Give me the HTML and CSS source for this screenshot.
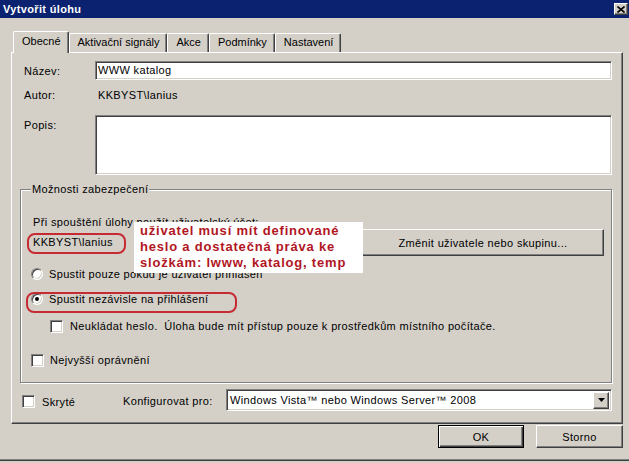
FILE: index.html
```html
<!DOCTYPE html>
<html lang="cs">
<head>
<meta charset="utf-8">
<title>Vytvořit úlohu</title>
<link rel="stylesheet" href="styles.css">
</head>
<body>
<div class="window">
  <div class="titlebar">
    <span class="title">Vytvořit úlohu</span>
    <span class="close"><svg width="8" height="7" viewBox="0 0 8 7"><path d="M0.5 0.5 L7.5 6.5 M7.5 0.5 L0.5 6.5" stroke="#000" stroke-width="1.6" fill="none"/></svg></span>
  </div>
  <div class="client">
    <div class="tabs">
      <div class="tab active">Obecné</div>
      <div class="tab">Aktivační signály</div>
      <div class="tab">Akce</div>
      <div class="tab">Podmínky</div>
      <div class="tab">Nastavení</div>
    </div>
    <div class="panel">
      <div class="form">
        <div class="lbl">Název:</div>
        <div class="field input">WWW katalog</div>
        <div class="lbl pad">Autor:</div>
        <div class="value pad">KKBYST\lanius</div>
        <div class="lbl">Popis:</div>
        <div class="field textarea"></div>
      </div>
      <div class="group">
        <div class="legend">Možnosti zabezpečení</div>
        <div class="g-text">Při spouštění úlohy použít uživatelský účet:</div>
        <div class="user-row">
          <span class="user">KKBYST\lanius</span>
          <div class="btn change">Změnit uživatele nebo skupinu...</div>
        </div>
        <div class="opt o1"><span class="radio"></span><span>Spustit pouze pokud je uživatel přihlášen</span></div>
        <div class="opt o2"><span class="radio on"></span><span>Spustit nezávisle na přihlášení</span></div>
        <div class="opt o3"><span class="check"></span><span>Neukládat heslo.&nbsp; Úloha bude mít přístup pouze k prostředkům místního počítače.</span></div>
        <div class="opt o4"><span class="check"></span><span>Nejvyšší oprávnění</span></div>
        <div class="note">uživatel musí mít definované<br>heslo a dostatečná práva ke<br>složkám: lwww, katalog, temp</div>
        <div class="mark m1"></div>
        <div class="mark m2"></div>
      </div>
      <div class="bottom-row">
        <div class="hidden-opt"><span class="check"></span><span>Skryté</span></div>
        <span class="cfg">Konfigurovat pro:</span>
        <div class="field select">
          <span class="sel-text">Windows Vista™ nebo Windows Server™ 2008</span>
          <span class="drop"><svg width="7" height="4" viewBox="0 0 7 4"><path d="M0 0 H7 L3.5 4 Z" fill="#000"/></svg></span>
        </div>
      </div>
    </div>
    <div class="buttons">
      <div class="btn default">OK</div>
      <div class="btn">Storno</div>
    </div>
  </div>
</div>
</body>
</html>
```

FILE: styles.css
```css
* { box-sizing: border-box; }
html, body { margin: 0; padding: 0; }
body {
  width: 629px;
  height: 463px;
  overflow: hidden;
  background: #d4d0c8;
  font-family: "Liberation Sans", Arial, sans-serif;
  font-size: 11px;
  letter-spacing: 0.35px;
  color: #000;
}
.window {
  width: 629px;
  height: 461px;
  display: flex;
  flex-direction: column;
  background: #d4d0c8;
  border-bottom: 1px solid #404040;
  box-shadow: inset 0 -1px 0 #808080;
}
.titlebar {
  height: 18px;
  background: #0a2270;
  display: flex;
  align-items: center;
  justify-content: space-between;
  padding: 0 1px 0 3px;
}
.title {
  color: #fff;
  font-weight: bold;
  font-size: 11px;
}
.close {
  width: 14px;
  height: 12px;
  background: #d4d0c8;
  border: 1px solid;
  border-color: #fff #404040 #404040 #fff;
  box-shadow: inset -1px -1px 0 #808080;
  display: flex;
  align-items: center;
  justify-content: center;
}
.client {
  flex: 1;
  display: flex;
  flex-direction: column;
  padding: 0 6px 0 11px;
}
.tabs {
  display: flex;
  align-items: flex-end;
  height: 21px;
  margin: 13px 0 0 2px;
  position: relative;
  z-index: 1;
  letter-spacing: 0;
}
.tab {
  height: 19px;
  padding: 0 7px 0 8px;
  border: 1px solid;
  border-color: #fff #404040 transparent #fff;
  border-bottom: none;
  border-radius: 2px 2px 0 0;
  box-shadow: inset -1px 0 0 #808080;
  line-height: 17px;
  background: #d4d0c8;
}
.tab.active {
  height: 22px;
  margin-bottom: -1px;
  line-height: 19px;
}
.panel {
  height: 372px;
  border: 1px solid;
  border-color: #fff #404040 #404040 #fff;
  box-shadow: inset -1px -1px 0 #808080;
  padding: 8px 10px 0 8px;
  display: flex;
  flex-direction: column;
}
.form {
  display: grid;
  grid-template-columns: 71px 1fr;
  grid-template-rows: 19px 35px 60px;
  margin-left: 4px;
}
.lbl { line-height: 14px; padding-top: 3px; }
.pad { padding-top: 8px; }
.value { line-height: 14px; padding-left: 3px; }
.field {
  background: #fff;
  border: 1px solid;
  border-color: #808080 #fff #fff #808080;
  box-shadow: inset 1px 1px 0 #404040, inset -1px -1px 0 #d4d0c8;
}
.input { line-height: 17px; padding-left: 2px; }
.group {
  position: relative;
  margin-top: 14px;
  border: 1px solid #808080;
  box-shadow: inset 1px 1px 0 #fff, 1px 1px 0 #fff;
  padding: 0 7px 15px 10px;
  display: flex;
  flex-direction: column;
}
.legend {
  align-self: flex-start;
  margin-top: -7px;
  line-height: 13px;
  padding: 0 1px;
  background: #d4d0c8;
}
.g-text { margin: 19px 0 0 2px; line-height: 14px; }
.user-row {
  height: 27px;
  display: flex;
  align-items: center;
  justify-content: space-between;
}
.user { margin-left: 2px; padding-bottom: 2px; }
.btn {
  background: #d4d0c8;
  border: 1px solid;
  border-color: #fff #404040 #404040 #fff;
  box-shadow: inset -1px -1px 0 #808080;
  display: flex;
  align-items: center;
  justify-content: center;
}
.change { width: 242px; height: 27px; }
.opt {
  display: flex;
  align-items: center;
  gap: 6px;
  height: 14px;
  line-height: 14px;
}
.o1 { margin-top: 11px; }
.o2 { margin-top: 11px; }
.o3 { margin-top: 13px; margin-left: 19px; gap: 7px; }
.o4 { margin-top: 20px; }
.radio {
  position: relative;
  width: 12px;
  height: 12px;
  flex: none;
  border-radius: 50%;
  background: #fff;
  border: 1px solid;
  border-color: #808080 #fff #fff #808080;
  box-shadow: inset 1px 1px 0 #404040, inset -1px -1px 0 #d4d0c8;
}
.radio.on::after {
  content: "";
  position: absolute;
  left: 3px;
  top: 3px;
  width: 4px;
  height: 4px;
  border-radius: 50%;
  background: #000;
}
.check {
  width: 13px;
  height: 13px;
  flex: none;
  background: #fff;
  border: 1px solid;
  border-color: #808080 #fff #fff #808080;
  box-shadow: inset 1px 1px 0 #404040, inset -1px -1px 0 #d4d0c8;
}
.note {
  position: absolute;
  left: 113px;
  top: 32px;
  width: 229px;
  height: 51px;
  background: #fff;
  color: #b1161f;
  font-weight: bold;
  font-size: 13px;
  letter-spacing: 0.8px;
  line-height: 16px;
  padding: 1px 0 0 6px;
  white-space: nowrap;
}
.mark {
  position: absolute;
  border: 2px solid #c62a33;
  border-radius: 8px;
  height: 21px;
}
.m1 { left: 6px; top: 43px; width: 99px; }
.m2 { left: 5px; top: 102px; width: 211px; }
.bottom-row {
  margin-top: 6px;
  height: 22px;
  display: grid;
  grid-template-columns: 103px 103px 1fr;
  align-items: center;
}
.hidden-opt {
  display: flex;
  align-items: center;
  gap: 7px;
  margin-left: 2px;
  padding-top: 3px;
}
.cfg { padding-top: 2px; }
.select {
  height: 22px;
  display: flex;
  align-items: center;
  padding: 2px 2px 2px 3px;
}
.sel-text { flex: 1; line-height: 16px; }
.drop {
  width: 16px;
  height: 17px;
  background: #d4d0c8;
  border: 1px solid;
  border-color: #fff #404040 #404040 #fff;
  box-shadow: inset -1px -1px 0 #808080;
  display: flex;
  align-items: center;
  justify-content: center;
}
.buttons {
  display: flex;
  justify-content: flex-end;
  gap: 12px;
  margin-top: 1px;
}
.buttons .btn { height: 23px; width: 87px; }
.buttons .default {
  width: 86px;
  border: 1px solid #000;
  box-shadow: inset 1px 1px 0 #fff, inset -1px -1px 0 #404040, inset -2px -2px 0 #808080;
}
```
